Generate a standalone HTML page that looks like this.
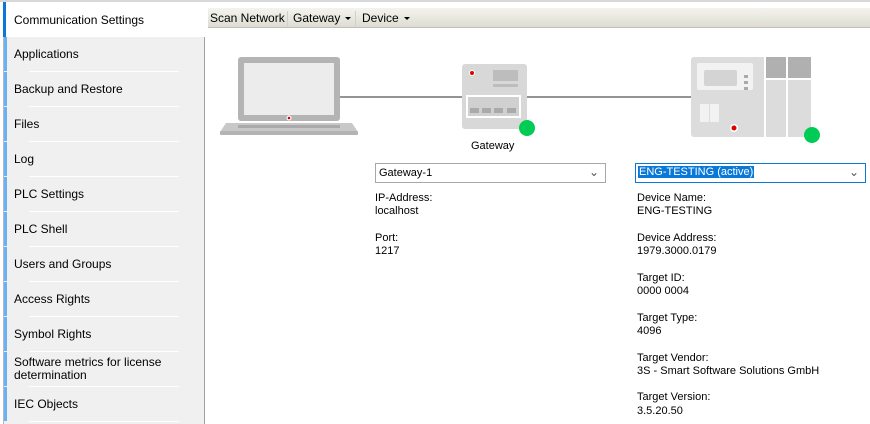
<!DOCTYPE html>
<html><head><style>
*{margin:0;padding:0;box-sizing:border-box}
body{width:870px;height:424px;background:#fff;font-family:"Liberation Sans",sans-serif;font-size:12px;color:#000;position:relative;overflow:hidden}
.a{position:absolute}
.side{left:3px;top:37px;width:202px;height:387px;background:#f0f0f0;border-right:1px solid #a0a0a0;border-left:1px solid #b8b8b8}
.item{position:absolute;left:0;width:201px;height:35px;}
.item .strip{position:absolute;left:0;top:0;width:3px;height:34px;background:#66b2f4}
.item .sep{position:absolute;left:25px;width:150px;top:34px;height:1px;background:#fff}
.item span{position:absolute;left:10px;top:11px;line-height:13px}
.tb{left:208px;top:8px;width:662px;height:20px;background:linear-gradient(#f4f4ee,#dedcd2);border-bottom:1px solid #c0c0b8;font-size:12px}
.tb span{position:absolute;top:3px}
.tb i{position:absolute;top:3px;width:1px;height:15px;background:#d0d0c8}
.tri{display:inline-block;border-left:3px solid transparent;border-right:3px solid transparent;border-top:3px solid #000;vertical-align:middle;margin-left:5px}
.sm{font-size:11px;line-height:13.3px}
.dd{height:20px;border:1px solid #a8a8a8;background:#fff;font-size:12px}
</style></head><body>
<div class="a" style="left:0;top:0;width:870px;height:2px;background:#d8d8d8"></div>
<div class="a" style="left:3px;top:2px;width:202px;height:35px;background:#fff;border-left:3px solid #0a78d7"></div>
<div class="a" style="left:14px;top:13px">Communication Settings</div>
<div class="a side">
<div class="item" style="top:0"><div class="strip"></div><div class="sep"></div><span>Applications</span></div>
<div class="item" style="top:35px"><div class="strip"></div><div class="sep"></div><span>Backup and Restore</span></div>
<div class="item" style="top:70px"><div class="strip"></div><div class="sep"></div><span>Files</span></div>
<div class="item" style="top:105px"><div class="strip"></div><div class="sep"></div><span>Log</span></div>
<div class="item" style="top:140px"><div class="strip"></div><div class="sep"></div><span>PLC Settings</span></div>
<div class="item" style="top:175px"><div class="strip"></div><div class="sep"></div><span>PLC Shell</span></div>
<div class="item" style="top:210px"><div class="strip"></div><div class="sep"></div><span>Users and Groups</span></div>
<div class="item" style="top:245px"><div class="strip"></div><div class="sep"></div><span>Access Rights</span></div>
<div class="item" style="top:280px"><div class="strip"></div><div class="sep"></div><span>Symbol Rights</span></div>
<div class="item" style="top:315px"><div class="strip"></div><div class="sep"></div><span style="top:4px">Software metrics for license<br>determination</span></div>
<div class="item" style="top:350px"><div class="strip"></div><div class="sep"></div><span>IEC Objects</span></div>
</div>
<div class="a tb">
<span style="left:2px">Scan Network</span><i style="left:79px"></i>
<span style="left:85px">Gateway<b class="tri"></b></span><i style="left:147px"></i>
<span style="left:154px">Device<b class="tri"></b></span>
</div>
<svg class="a" style="left:205px;top:30px" width="665" height="120" viewBox="205 30 665 120">
<line x1="340" y1="97" x2="691" y2="97" stroke="#555" stroke-width="1.3"/>
<rect x="238" y="57" width="102" height="64" rx="3" fill="#b4b4b4"/>
<rect x="244" y="63" width="90" height="52" fill="#ececec"/>
<circle cx="289" cy="118" r="2.5" fill="#fff"/><circle cx="289" cy="118" r="1.3" fill="#d00"/>
<path d="M226 123H352L358 132H220Z" fill="#c8c8c8"/><rect x="220" y="131" width="138" height="4" rx="1" fill="#b4b4b4"/>
<rect x="238" y="125" width="102" height="3" fill="#aaa"/>
<rect x="462" y="64" width="65" height="65" rx="3" fill="#d8d8d8"/>
<circle cx="472" cy="73" r="3" fill="#fff"/><circle cx="472" cy="73" r="2" fill="#d00"/>
<rect x="493" y="70" width="25" height="11" fill="#bdbdbd"/><rect x="493" y="84" width="25" height="3" fill="#bdbdbd"/>
<rect x="466" y="95" width="55" height="23" fill="#fff"/><rect x="468" y="97" width="51" height="19" fill="#d0d0d0"/>
<rect x="470" y="108" width="9" height="5" fill="#aaa"/><rect x="482" y="108" width="9" height="5" fill="#aaa"/><rect x="494" y="108" width="9" height="5" fill="#aaa"/><rect x="507" y="108" width="9" height="5" fill="#aaa"/>
<circle cx="527" cy="128" r="8" fill="#00cc55"/>
<rect x="691" y="57" width="120" height="80" rx="3" fill="#dcdcdc"/>
<rect x="697" y="63" width="56" height="27" rx="2" fill="#f2f2f2"/><rect x="704" y="70" width="33" height="16" rx="2" fill="#d4d4d4"/>
<rect x="744" y="75" width="4" height="3" fill="#aaa"/><rect x="744" y="81" width="4" height="3" fill="#aaa"/><rect x="744" y="87" width="4" height="3" fill="#aaa"/>
<rect x="700" y="104" width="9" height="18" fill="#f2f2f2"/><rect x="710" y="104" width="9" height="18" fill="#f2f2f2"/>
<rect x="764" y="57" width="2" height="80" fill="#fff"/><rect x="786" y="57" width="2" height="80" fill="#fff"/><rect x="766" y="78" width="45" height="2" fill="#fff"/>
<rect x="766" y="57" width="20" height="21" fill="#b0b0b0"/><rect x="788" y="57" width="23" height="21" fill="#b0b0b0"/>
<circle cx="734" cy="128" r="4" fill="#fff"/><circle cx="734" cy="128" r="2.5" fill="#d00"/>
<circle cx="812" cy="135" r="8" fill="#00cc55"/>
</svg>
<div class="a" style="left:471px;top:140px;font-size:11px">Gateway</div>
<div class="a dd" style="left:375px;top:163px;width:231px"><span style="position:absolute;left:3px;top:3px;font-size:11px">Gateway-1</span><span style="position:absolute;right:6px;top:1px;color:#555">&#8964;</span></div>
<div class="a dd" style="left:635px;top:163px;width:231px;border-color:#0a78d7"><span style="position:absolute;left:2px;top:2px;font-size:11px;background:#0a78d7;color:#fff;padding:0 1px">ENG-TESTING (active)</span><span style="position:absolute;right:6px;top:1px;color:#555">&#8964;</span></div>
<div class="a sm" style="left:375px;top:192px">IP-Address:<br>localhost<br><br>Port:<br>1217</div>
<div class="a sm" style="left:637px;top:192px">Device Name:<br>ENG-TESTING<br><br>Device Address:<br>1979.3000.0179<br><br>Target ID:<br>0000 0004<br><br>Target Type:<br>4096<br><br>Target Vendor:<br>3S - Smart Software Solutions GmbH<br><br>Target Version:<br>3.5.20.50</div>
</body></html>
